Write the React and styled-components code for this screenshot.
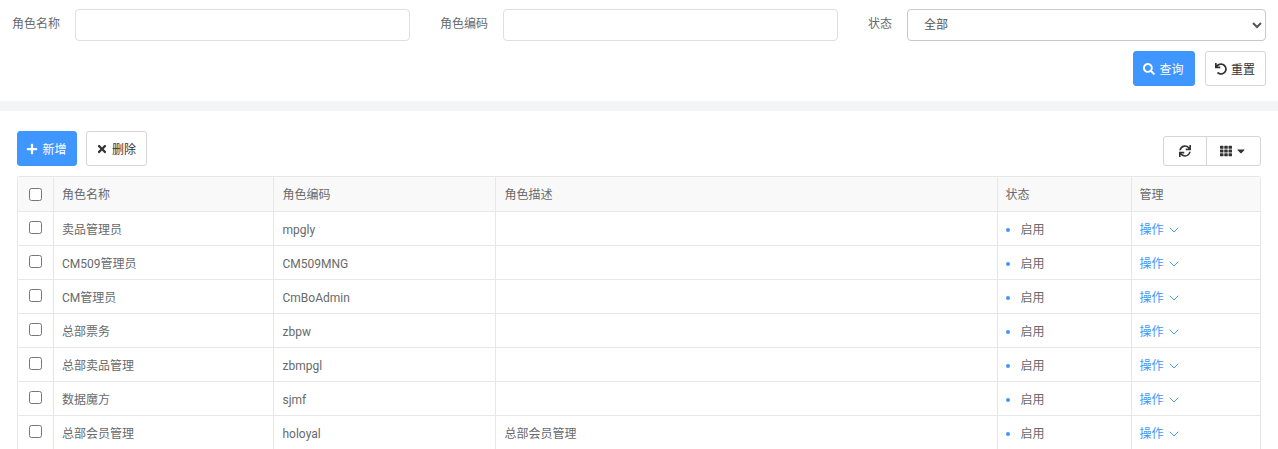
import React from "react";
import styled, { createGlobalStyle } from "styled-components";
import { FaSearch, FaUndo, FaPlus, FaTimes, FaSync, FaTh, FaCaretDown } from "react-icons/fa";
import { LuChevronDown } from "react-icons/lu";

const GlobalStyle = createGlobalStyle`
  html, body {
    margin: 0;
    height: 100%;
    overflow: hidden;
    background: #fff;
  }
  body {
    font-family: Roboto, "Noto Sans CJK SC", sans-serif;
    font-size: 12px;
    color: #676a6c;
  }
`;

const Page = styled.div`
  height: 449px;
  overflow: hidden;
`;

//
// ** search form **
//
const SearchPanel = styled.div`
  height: 101px;
  box-sizing: border-box;
  padding: 9px 12px 0;
`;

const FieldRow = styled.div`
  display: flex;
  gap: 30px;
`;

const Field = styled.label`
  flex: 1;
  display: flex;
  align-items: flex-start;
`;

const FieldLabel = styled.span`
  margin-right: 15px;
  line-height: 30px;
`;

const TextInput = styled.input`
  flex: 1;
  min-width: 0;
  height: 32px;
  box-sizing: border-box;
  border: 1px solid #dcdfe3;
  border-radius: 4px;
  background: #fff;
`;

const Select = styled.select`
  flex: 1;
  min-width: 0;
  height: 32px;
  box-sizing: border-box;
  padding-left: 12px;
  border: 1px solid #c8c8c8;
  border-radius: 4px;
  background: #fff;
  font: inherit;
  color: #555;
`;

const FormActions = styled.div`
  display: flex;
  justify-content: flex-end;
  gap: 10px;
  margin-top: 10px;
`;

const Button = styled.button`
  display: inline-flex;
  align-items: center;
  justify-content: center;
  gap: 4px;
  width: ${(p) => p.$width}px;
  height: 35px;
  box-sizing: border-box;
  padding: 0 1px 0 0;
  border: 1px solid ${(p) => (p.$primary ? "#4096ff" : "#d5d5d5")};
  border-radius: 3px;
  background: ${(p) => (p.$primary ? "#4096ff" : "#fff")};
  color: ${(p) => (p.$primary ? "#fff" : "#333")};
  font: inherit;
  svg {
    font-size: 12px;
  }
`;

const Band = styled.div`
  height: 10px;
  background: #f3f4f6;
`;

//
// ** role list **
//
const ListPanel = styled.div`
  padding: 20px 17px 0;
`;

const Toolbar = styled.div`
  display: flex;
  justify-content: space-between;
  align-items: flex-end;
  margin-bottom: 10px;
`;

const ToolbarGroup = styled.div`
  display: flex;
  gap: 9px;
`;

const IconGroup = styled.div`
  display: flex;
`;

const IconButton = styled.button`
  display: inline-flex;
  align-items: center;
  justify-content: center;
  gap: 3px;
  width: ${(p) => p.$width}px;
  height: 30px;
  box-sizing: border-box;
  padding: 0;
  margin-left: ${(p) => (p.$joined ? "-1px" : "0")};
  border: 1px solid #d5d5d5;
  border-radius: ${(p) => (p.$joined ? "0 3px 3px 0" : "3px 0 0 3px")};
  background: #fff;
  color: #333;
  svg {
    font-size: 12px;
  }
`;

const TableFrame = styled.div`
  border: 1px solid #e7e7e7;
  border-bottom: 0;
  border-radius: 3px 3px 0 0;
`;

const Table = styled.table`
  width: 100%;
  table-layout: fixed;
  border-collapse: collapse;
  line-height: 16px;
  th:nth-child(2),
  td:nth-child(2) {
    padding-left: 8.5px;
  }
  th:nth-child(3),
  td:nth-child(3),
  th:nth-child(4),
  td:nth-child(4) {
    padding-left: 9px;
  }
  th:first-child,
  td:first-child {
    padding: 0;
  }
`;

const HeadCell = styled.th`
  height: 34px;
  padding: 3px 8px 0;
  box-sizing: border-box;
  background: #f9f9f9;
  border-left: 1px solid #e7e7e7;
  border-bottom: 1px solid #e7e7e7;
  font-weight: 400;
  text-align: left;
  &:first-child {
    border-left: 0;
  }
`;

const Cell = styled.td`
  height: 34px;
  padding: 3px 8px 0;
  box-sizing: border-box;
  border-left: 1px solid #e7e7e7;
  border-bottom: 1px solid #e7e7e7;
  &:first-child {
    border-left: 0;
  }
`;

const Checkbox = styled.input.attrs({ type: "checkbox" })`
  display: block;
  width: 13px;
  height: 13px;
  margin: ${(p) => (p.$head ? "2px" : "-1px")} auto 0;
`;

const StatusText = styled.span`
  display: flex;
  align-items: center;
  gap: 11px;
  &::before {
    content: "";
    width: 4px;
    height: 4px;
    border-radius: 50%;
    background: #4096ff;
  }
`;

const ActionLink = styled.a`
  display: inline-flex;
  align-items: center;
  gap: 2px;
  color: #4096ff;
  svg {
    font-size: 16px;
    stroke-width: 1.4;
  }
`;

const roles = [
  { name: "卖品管理员", code: "mpgly", desc: "" },
  { name: "CM509管理员", code: "CM509MNG", desc: "" },
  { name: "CM管理员", code: "CmBoAdmin", desc: "" },
  { name: "总部票务", code: "zbpw", desc: "" },
  { name: "总部卖品管理", code: "zbmpgl", desc: "" },
  { name: "数据魔方", code: "sjmf", desc: "" },
  { name: "总部会员管理", code: "holoyal", desc: "总部会员管理" },
];

const App = () => {
  return (
    <Page>
      <GlobalStyle />
      <SearchPanel>
        <FieldRow>
          <Field>
            <FieldLabel>角色名称</FieldLabel>
            <TextInput />
          </Field>
          <Field>
            <FieldLabel>角色编码</FieldLabel>
            <TextInput />
          </Field>
          <Field>
            <FieldLabel>状态</FieldLabel>
            <Select defaultValue="all">
              <option value="all">全部</option>
            </Select>
          </Field>
        </FieldRow>
        <FormActions>
          <Button $primary $width={62}>
            <FaSearch />
            查询
          </Button>
          <Button $width={61}>
            <FaUndo />
            重置
          </Button>
        </FormActions>
      </SearchPanel>
      <Band />
      <ListPanel>
        <Toolbar>
          <ToolbarGroup>
            <Button $primary $width={60}>
              <FaPlus />
              新增
            </Button>
            <Button $width={61}>
              <FaTimes />
              删除
            </Button>
          </ToolbarGroup>
          <IconGroup>
            <IconButton $width={44}>
              <FaSync />
            </IconButton>
            <IconButton $joined $width={55}>
              <FaTh />
              <FaCaretDown />
            </IconButton>
          </IconGroup>
        </Toolbar>
        <TableFrame>
          <Table>
            <colgroup>
              <col width="35" />
              <col width="220" />
              <col width="222" />
              <col width="502" />
              <col width="134" />
              <col />
            </colgroup>
            <thead>
              <tr>
                <HeadCell>
                  <Checkbox $head />
                </HeadCell>
                <HeadCell>角色名称</HeadCell>
                <HeadCell>角色编码</HeadCell>
                <HeadCell>角色描述</HeadCell>
                <HeadCell>状态</HeadCell>
                <HeadCell>管理</HeadCell>
              </tr>
            </thead>
            <tbody>
              {roles.map((role) => (
                <tr key={role.code}>
                  <Cell>
                    <Checkbox />
                  </Cell>
                  <Cell>{role.name}</Cell>
                  <Cell>{role.code}</Cell>
                  <Cell>{role.desc}</Cell>
                  <Cell>
                    <StatusText>启用</StatusText>
                  </Cell>
                  <Cell>
                    <ActionLink>
                      操作 <LuChevronDown />
                    </ActionLink>
                  </Cell>
                </tr>
              ))}
            </tbody>
          </Table>
        </TableFrame>
      </ListPanel>
    </Page>
  );
};

export default App;
